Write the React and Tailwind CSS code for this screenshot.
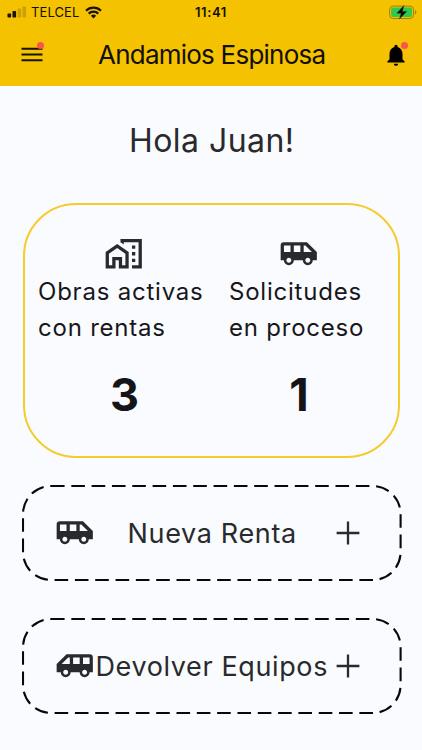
import { MdAirportShuttle, MdOutlineHomeWork, MdNotifications } from "react-icons/md";

function SignalIcon() {
  return (
    <svg width="20" height="12" viewBox="0 0 20 12" className="block">
      <rect x="0.5" y="7.5" width="3.6" height="4" rx="0.8" fill="#171300" />
      <rect x="5.5" y="5" width="3.6" height="6.5" rx="0.8" fill="#171300" />
      <rect x="10.6" y="2.5" width="3.6" height="9" rx="0.8" fill="#c9a106" />
      <rect x="15.5" y="0.5" width="3.6" height="11" rx="0.8" fill="#c9a106" />
    </svg>
  );
}

function WifiIcon() {
  return (
    <svg width="17" height="13" viewBox="0 0 17 13" className="block" fill="none" stroke="#171300">
      <path d="M1 4.7a10.7 10.7 0 0 1 15 0" strokeWidth="2.3" />
      <path d="M3.7 7.6a6.9 6.9 0 0 1 9.6 0" strokeWidth="2.2" />
      <path d="M8.5 12.4 5.9 9.8a3.7 3.7 0 0 1 5.2 0z" fill="#171300" stroke="none" />
    </svg>
  );
}

function BatteryIcon() {
  return (
    <svg width="28" height="15" viewBox="0 0 28 15" className="block">
      <rect x="0.6" y="1.1" width="24" height="12.4" rx="3.6" fill="none" stroke="#9c8213" strokeWidth="1" />
      <path d="M26 5.2v4.2c1-.4 1.4-1.1 1.4-2.1S27 5.6 26 5.2z" fill="#9c8213" />
      <rect x="2.1" y="2.6" width="21" height="9.4" rx="2.2" fill="#2fc94f" />
      <path d="M14.9.6 7.9 8.2h4.3l-1.8 5.9 7.3-7.7h-4.4z" fill="#0c0c05" stroke="#0c0c05" strokeWidth="0.3" />
    </svg>
  );
}

function Dot({ className }) {
  return <span className={`absolute size-[7px] rounded-full bg-[#fa544c] ${className}`} />;
}

function Stat({ icon, lines, value, className, valueClass }) {
  return (
    <div className={`flex flex-col ${className}`}>
      <div className="flex h-[40px] justify-center">{icon}</div>
      <p className="whitespace-nowrap text-[24px] leading-[36px] tracking-[0.78px] text-[#17171b]">
        {lines[0]}
        <br />
        {lines[1]}
      </p>
      <div className={`mt-[24px] text-center text-[45px] font-bold leading-[50px] text-[#151419] ${valueClass}`}>{value}</div>
    </div>
  );
}

function Action({ flipped, label, className, labelClass }) {
  return (
    <button className={`relative block h-[96px] w-[380px] text-[#292a2d] ${className}`}>
      <svg width="380" height="96" className="absolute inset-0" fill="none">
        <rect x="1" y="1" width="377.6" height="94" rx="28" stroke="#08080a" strokeWidth="2.1" strokeDasharray="13.6 6.72" />
      </svg>
      <span className="flex h-full items-center pl-[33px]">
        <MdAirportShuttle size={39.5} className={`shrink-0 ${flipped ? "-scale-x-100" : ""}`} />
        <span className={`whitespace-nowrap pt-[2px] text-left text-[27px] leading-[36px] ${labelClass}`}>{label}</span>
        <svg width="24" height="24" viewBox="0 0 24 24" className="shrink-0" stroke="currentColor" strokeWidth="2.3">
          <path d="M12 .6v22.8M.6 12h22.8" />
        </svg>
      </span>
    </button>
  );
}

export default function App() {
  return (
    <div className="flex h-[750px] w-[422px] flex-col overflow-hidden bg-[#fafbff] font-['Inter','Liberation_Sans',sans-serif]">
      <header className="h-[86px] bg-[#f5c200] text-[#121006]">
        <div className="flex h-[24px] items-center">
          <div className="flex w-[195px] items-center pl-[7px]">
            <SignalIcon />
            <span className="ml-[4px] w-[54px] text-[13px] leading-[16px] tracking-[0.1px]">TELCEL</span>
            <WifiIcon />
          </div>
          <span className="w-[194px] text-[13px] font-semibold leading-[16px] tracking-[0.6px]">11:41</span>
          <BatteryIcon />
        </div>
        <div className="flex h-[62px] items-center">
          <div className="relative ml-[21px] h-[16px] w-[77px]">
            <svg width="22" height="16" className="block" stroke="#151207" strokeWidth="2.1">
              <path d="M.5 1.7h21M.5 7.5h21M.5 13.3h21" />
            </svg>
            <Dot className="-top-[5px] left-[16px]" />
          </div>
          <h1 className="w-[285px] whitespace-nowrap text-[26px] leading-[32px] tracking-[-0.77px]">Andamios Espinosa</h1>
          <div className="relative">
            <MdNotifications size={26} className="block text-black" />
            <Dot className="-top-[0px] left-[18px]" />
          </div>
        </div>
      </header>

      <main className="flex flex-col">
        <h2 className="mt-[35px] whitespace-nowrap pl-[129px] text-[32px] leading-[40px] tracking-[0.45px] text-[#292a2d]">Hola Juan!</h2>

        <section className="ml-[23px] mt-[42px] flex h-[255px] w-[377px] rounded-[53px] border-2 border-[#f5cb2e] pt-[29px]">
          <Stat
            className="ml-[13px] w-[191px]"
            valueClass="pr-[18px]"
            icon={<MdOutlineHomeWork size={39.5} className="mr-[19px] text-[#292a2d]" />}
            lines={["Obras activas", "con rentas"]}
            value="3"
          />
          <Stat
            className="w-[140px]"
            valueClass=""
            icon={<MdAirportShuttle size={39.5} className="text-[#292a2d]" />}
            lines={["Solicitudes", "en proceso"]}
            value="1"
          />
        </section>

        <Action className="ml-[22px] mt-[27px]" label="Nueva Renta" labelClass="ml-[33px] w-[208px] tracking-[0.66px]" />
        <Action className="ml-[22px] mt-[37px]" flipped label="Devolver Equipos" labelClass="ml-[1px] w-[240px] tracking-[0.62px]" />
      </main>
    </div>
  );
}
